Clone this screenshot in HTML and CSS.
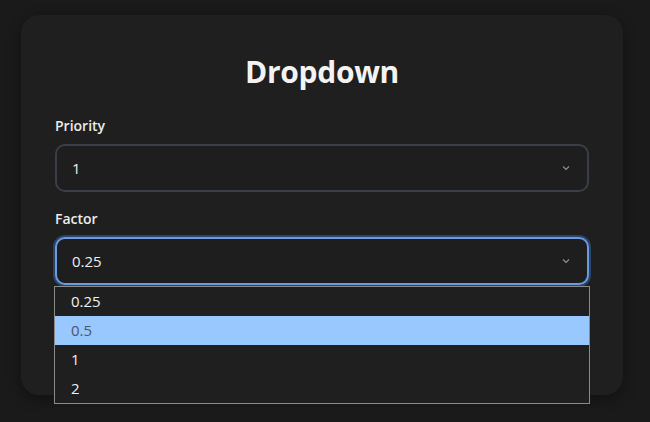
FILE: index.html
```html
<!DOCTYPE html>
<html lang="en">
<head>
<meta charset="utf-8">
<title>Dropdown</title>
<link rel="stylesheet" href="styles.css">
</head>
<body>
  <div class="card">
    <h1 class="title">Dropdown</h1>
    <div class="field">
      <label class="label">Priority</label>
      <div class="select">
        <span class="value">1</span>
        <svg class="chevron" width="8" height="6" viewBox="0 0 8 6"><path d="M1 1.5 L4 4.5 L7 1.5" fill="none" stroke="#8a8f98" stroke-width="1.2"/></svg>
      </div>
    </div>
    <div class="field">
      <label class="label">Factor</label>
      <div class="select select-open">
        <span class="value">0.25</span>
        <svg class="chevron" width="8" height="6" viewBox="0 0 8 6"><path d="M1 1.5 L4 4.5 L7 1.5" fill="none" stroke="#8a8f98" stroke-width="1.2"/></svg>
        <ul class="options">
          <li class="option">0.25</li>
          <li class="option option-active">0.5</li>
          <li class="option">1</li>
          <li class="option">2</li>
        </ul>
      </div>
    </div>
  </div>
</body>
</html>
```

FILE: styles.css
```css
* { box-sizing: border-box; }
html, body { margin: 0; }
body {
  background: #1a1a1a;
  padding: 15px 0 0 21px;
  font-family: "Open Sans", "Noto Sans", sans-serif;
  color: #eeeeee;
  height: 422px;
  overflow: hidden;
}
.card {
  width: 602px;
  height: 380px;
  background: #1f1f1f;
  border-radius: 18px;
  padding: 37px 34px 0 34px;
  box-shadow: 0 4px 14px rgba(0,0,0,0.35);
}
.title {
  margin: 0 0 24px 0;
  text-align: center;
  font-size: 30px;
  line-height: 40px;
  font-weight: 700;
  color: #f3f3f3;
  letter-spacing: -0.3px;
}
.field {
  display: flex;
  flex-direction: column;
  gap: 8px;
  margin-bottom: 17px;
}
.label {
  font-size: 14px;
  line-height: 20px;
  font-weight: 600;
  color: #ececec;
}
.select {
  position: relative;
  height: 48px;
  border: 2px solid #3a3e49;
  border-radius: 10px;
  background: #1e1e1e;
  display: flex;
  align-items: center;
  justify-content: space-between;
  padding: 0 17px 0 15px;
  font-size: 15px;
  color: #eeeeee;
}
.select-open {
  border-color: #6a9be0;
  box-shadow: 0 0 0 2px #2b4366;
}
.value { line-height: 20px; }
.chevron { display: block; }
.options {
  position: absolute;
  top: 47px;
  left: -3px;
  width: 536px;
  margin: 0;
  padding: 0;
  list-style: none;
  background: #1f1f1f;
  border: 1px solid #8a8a8a;
}
.option {
  height: 29px;
  line-height: 29px;
  padding-left: 16px;
  font-size: 15px;
  color: #f0f0f0;
}
.option-active {
  background: #99c8ff;
  color: #4f5664;
}
```
